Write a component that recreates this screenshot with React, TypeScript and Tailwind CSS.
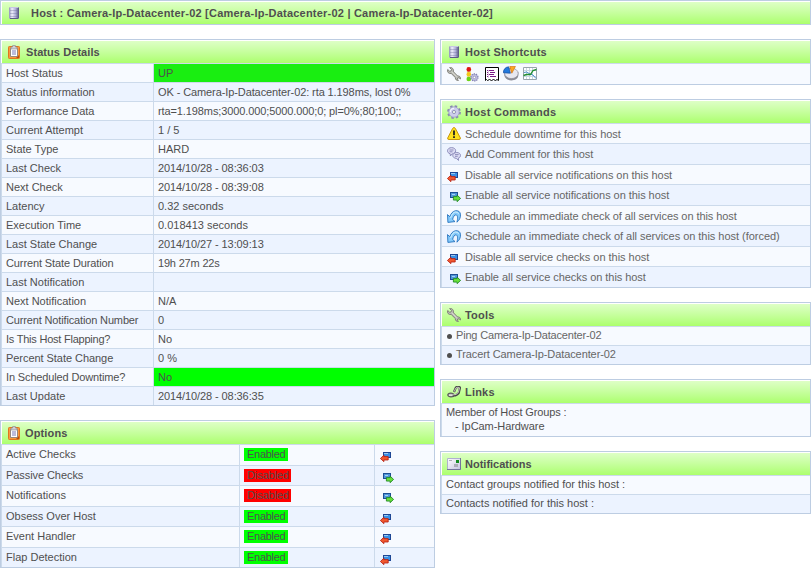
import type { ReactNode } from "react";

function Database() {
  return (
    <svg width="10" height="12" viewBox="0 0 10 12" className="block shrink-0">
      <defs>
        <linearGradient id="db" x1="0" x2="1">
          <stop offset="0" stopColor="#8e8eb8" />
          <stop offset=".3" stopColor="#f0f0fc" />
          <stop offset=".65" stopColor="#b0b0d8" />
          <stop offset="1" stopColor="#50507a" />
        </linearGradient>
      </defs>
      <path d="M0 1Q0 0 2 0H8Q10 0 10 1V11Q10 12 8 12H2Q0 12 0 11Z" fill="url(#db)" />
      <path d="M1 .5h8" stroke="#c6c6e4" />
      <path d="M1 3.5h8M1 6.5h8M1 9.5h8" stroke="#6c6c9c" strokeOpacity=".35" />
      <path d="M1 11.5h8" stroke="#5c5c86" />
    </svg>
  );
}

function Clipboard() {
  return (
    <svg width="12" height="14" viewBox="0 0 12 14" className="block shrink-0">
      <rect x=".5" y="1.5" width="11" height="12" rx=".8" fill="#fb9a3c" stroke="#e0761e" />
      <path d="M2.5 3.5h7v8h-7z" fill="#fff" stroke="#98887c" />
      <path d="M4 5h4v5H4z" fill="#bcbcdc" />
      <path d="M3 4V2h1.6V.5h2.8V2H9v2z" fill="#d0d0d8" stroke="#84848c" strokeWidth=".6" />
      <path d="M11 10v3H8z" fill="#b94c0c" />
    </svg>
  );
}

function Gear() {
  return (
    <svg width="14" height="14" viewBox="0 0 14 14" className="block shrink-0">
      <circle cx="7" cy="7" r="5.8" fill="none" stroke="#8888b2" strokeWidth="2.2" strokeDasharray="2.4 2.155" />
      <circle cx="7" cy="7" r="5.2" fill="#cdcdec" stroke="#9c9cc4" strokeWidth=".8" />
      <path d="M3.3 7A3.7 3.7 0 0 1 7 3.3" fill="none" stroke="#f2f2ff" strokeWidth="1.2" />
      <circle cx="7" cy="7" r="1.6" fill="#f0fbe8" stroke="#8484b0" strokeWidth=".8" />
    </svg>
  );
}

function Wrench() {
  return (
    <svg width="14" height="14" viewBox="0 0 14 14" className="block shrink-0">
      <path
        d="M2.6.6L4.5 2.5 4 4 2.6 4.2.7 2.5C-.1 4.8 1.4 7 4.2 6.5L8.4 10.6C8.2 12.6 9.5 13.7 11.5 13.4L10.4 12.2 10.7 11 12 10.7 13.4 12C13.9 9.8 12.3 8.7 10.6 9L6.5 4.8C6.9 2 4.9-.1 2.6.6Z"
        fill="#bcbcb6" stroke="#787872" strokeWidth=".9"
      />
      <path d="M5 4.8l5 5" stroke="#e4e4de" strokeWidth=".8" />
    </svg>
  );
}

function TrafficGear() {
  return (
    <svg width="13" height="15" viewBox="0 0 13 15" className="block shrink-0">
      <path d="M.8 0h4v14h-4z" fill="#e9dfa4" />
      <circle cx="2.8" cy="2.4" r="2.3" fill="#e01414" />
      <circle cx="2.8" cy="7.2" r="2.2" fill="#f4c61c" />
      <circle cx="2.8" cy="12" r="2.3" fill="#6ad418" />
      <g transform="translate(4 6) scale(.63)">
        <circle cx="7" cy="7" r="5.5" fill="#c5c5e5" stroke="#8080ae" strokeWidth="2.3" strokeDasharray="2 1.45" />
        <circle cx="7" cy="7" r="4.7" fill="#c9c9e8" stroke="#9191bd" />
        <circle cx="7" cy="7" r="2" fill="#fff" stroke="#7777a5" />
      </g>
    </svg>
  );
}

function Report() {
  return (
    <svg width="14" height="15" viewBox="0 0 14 15" className="block shrink-0">
      <path d="M.5 13.5V.5h13v13l-1.5-1-1.5 1-2-1-2 1-2-1-2 1-1-1z" fill="#fff" stroke="#000" />
      <path d="M2 3.5h1M2 5.5h1M2 7.5h1M2 9.5h1M4 3.5h5M5 5.5h5M4 7.5h5M5 9.5h6" stroke="#7c1c88" />
      <path d="M3.5 3v8" stroke="#c9a0d0" strokeWidth=".6" />
    </svg>
  );
}

function Pie() {
  return (
    <svg width="16" height="15" viewBox="0 0 16 15" className="block shrink-0">
      <path d="M1.4 7.5v2C2 16 14.8 16 15.3 9.5V6z" fill="#8c8c96" />
      <ellipse cx="8.4" cy="7.4" rx="6.8" ry="5.2" fill="#e8e8f0" stroke="#8a8a94" strokeWidth=".7" />
      <path d="M7.4 7.2L.4 6.8C.2 3.4 2.6 1 5.6.8z" fill="#2379dc" stroke="#14499a" strokeWidth=".7" />
      <path d="M8.8 7.2L6.8.4H12.4z" fill="#ffa722" stroke="#d0700e" strokeWidth=".7" />
    </svg>
  );
}

function Chart() {
  return (
    <svg width="14" height="13" viewBox="0 0 14 13" className="block shrink-0">
      <path d="M.5.5h13v12H.5z" fill="#fff" stroke="#98a4ac" />
      <path d="M3.5 1v11M6.5 1v11M9.5 1v11M1 3.5h12M1 9.5h12" stroke="#c8d8e2" />
      <path d="M1 5.5L3.5 5 7 7l3 1 3 3.5" fill="none" stroke="#4a90cc" />
      <path d="M.5 8.5L3.5 7.5H7.5L10 3.5l3.5-1" fill="none" stroke="#238e30" strokeWidth="1.4" />
    </svg>
  );
}

function Warning() {
  return (
    <svg width="14" height="13" viewBox="0 0 14 13" className="block shrink-0">
      <path d="M7 .6Q8 .6 8.4 1.5L13.4 11Q13.6 12.5 12 12.5H2Q.3 12.5.7 11L5.6 1.5Q6 .6 7 .6Z" fill="#ffe11e" stroke="#c8960e" />
      <path d="M7 3.5v4.7M7 9.3V11" stroke="#222" strokeWidth="1.8" />
    </svg>
  );
}

function Comments() {
  return (
    <svg width="14" height="14" viewBox="0 0 14 14" className="block shrink-0" fill="#dcdcf4" stroke="#8686b6" strokeWidth=".9">
      <path d="M4.5.6C7 .6 8.7 2 8.7 3.8S7 6.9 5 7L3.4 9 3.2 6.8C1.4 6.3.5 5.2.5 3.8.5 2 2.3.6 4.5.6Z" />
      <path d="M2.5 3h4M2.5 4.8h3" />
      <path d="M9.8 5.5c2.2 0 3.7 1.3 3.7 2.9 0 1.3-.8 2.3-2.2 2.7l.2 2.3-2.2-2C7 11.2 5.8 10 5.8 8.4s1.7-2.9 4-2.9Z" />
      <path d="M8 7.6h3.6M8 9.3h2.7" />
    </svg>
  );
}

function Refresh() {
  return (
    <svg width="14" height="13" viewBox="0 0 14 13" className="block shrink-0">
      <path
        d="M.5 4.6L.9 12.4 8 11.6 5.6 9.4C6.2 7 7.4 4.6 9 4.8 10.8 5.2 11 8.4 9.9 12.2 12.4 10.2 13.6 7.6 13.5 4.8 13.4 1.8 11.4.4 8.6.7 5.8 1.2 3.8 3.6 2.8 6.7Z"
        fill="#86cbfb" stroke="#2673bd" strokeWidth=".9"
      />
      <path d="M3.6 7.8C4.8 4 6.6 2 8.8 2q2 0 2.8 1.8" stroke="#d9f2ff" strokeWidth="1" fill="none" />
    </svg>
  );
}

function TurnOff() {
  return (
    <svg width="11" height="10" viewBox="0 0 11 10" className="block shrink-0">
      <path d="M3 0h8v6H3z" fill="#1d4694" />
      <path d="M4 1h6v4H4z" fill="#398fe5" />
      <path d="M4 1h4v1H4z" fill="#9bcaf2" />
      <path d="M.4 6.5L3.9 3.2V4.6H8.2V8H3.9V9.7Z" fill="#f0582f" stroke="#b51c0e" strokeWidth=".8" />
    </svg>
  );
}

function TurnOn() {
  return (
    <svg width="11" height="10" viewBox="0 0 11 10" className="block shrink-0">
      <path d="M0 0h8v6H0z" fill="#1d4f94" />
      <path d="M1 1h6v4H1z" fill="#4e96d9" />
      <path d="M2 2h3v1H2z" fill="#a5d2f3" />
      <path d="M10.6 6.4L7.1 3.1V4.6H3.4V8.1h3.7v1.6Z" fill="#67df3c" stroke="#16811c" strokeWidth=".8" />
    </svg>
  );
}

function Chain() {
  return (
    <svg width="14" height="12" viewBox="0 0 14 12" className="block shrink-0" fill="none">
      <ellipse cx="3.9" cy="9" rx="3.1" ry="1.9" fill="#b8b8b2" stroke="#5c5c5c" strokeWidth="1.2" />
      <path d="M2 9.2h3" stroke="#f4f4f0" />
      <path d="M7 6L8.8 1.6Q11 0 13 1.6L11.8 6.8Q9.8 9.8 6 9.4" stroke="#484848" strokeWidth="2.2" />
      <path d="M7.2 5.6L9 1.8Q11 .6 12.6 1.8L11.3 6.6Q9.5 9 6 8.9" stroke="#d4d4cc" strokeWidth=".9" />
    </svg>
  );
}

function Envelope() {
  return (
    <svg width="14" height="12" viewBox="0 0 14 12" className="block shrink-0">
      <defs>
        <linearGradient id="env" x1="0" x2="1" y2="1">
          <stop stopColor="#fff" />
          <stop offset="1" stopColor="#c4c4e0" />
        </linearGradient>
      </defs>
      <path d="M.5.5h13v11H.5z" fill="url(#env)" stroke="#b0b0d0" />
      <path d="M13.5 0v11.5H0" stroke="#74749c" fill="none" />
      <path d="M9 2h3v3H9z" fill="#128a20" />
      <path d="M2 2.5h3M7 6.5h4M7 7.5h4M7 8.5h4" stroke="#acacb8" />
    </svg>
  );
}

/** Total widening or narrowing in px that is spread over the letters of a text. */
const fit: Record<string, number> = {
  "Host : Camera-Ip-Datacenter-02 [Camera-Ip-Datacenter-02 | Camera-Ip-Datacenter-02]": 17.5,
  "Status Details": 1,
  "Options": 1,
  "Host Shortcuts": 3,
  "Host Commands": 4,
  "Tools": 1,
  "Links": 1,
  "Performance Data": -1,
  "Current Notification Number": -4,
  "Current State Duration": -2.5,
  "Is This Host Flapping?": -5,
  "In Scheduled Downtime?": -3,
  "Percent State Change": -1,
  "OK - Camera-Ip-Datacenter-02: rta 1.198ms, lost 0%": -5,
  "rta=1.198ms;3000.000;5000.000;0; pl=0%;80;100;;": -5,
  "2014/10/28 - 08:36:03": -2,
  "2014/10/28 - 08:39:08": -2,
  "2014/10/27 - 13:09:13": -2,
  "2014/10/28 - 08:36:35": -2,
  "19h 27m 22s": -2,
  "Passive Checks": -1,
  "Enabled": -2,
  "Disabled": -1,
  "Add Comment for this host": -2,
  "Disable all service notifications on this host": -2,
  "Enable all service notifications on this host": -2.5,
  "Schedule an immediate check of all services on this host": -4,
  "Schedule an immediate check of all services on this host (forced)": -2,
  "Disable all service checks on this host": -1,
  "Enable all service checks on this host": -2,
  "Ping Camera-Ip-Datacenter-02": -5,
  "Tracert Camera-Ip-Datacenter-02": -3,
  "Member of Host Groups :": -3,
  "- IpCam-Hardware": -1,
};

function T({ children }: { children: string }) {
  return <span style={{ letterSpacing: `${(fit[children] ?? 0) / Math.max(1, children.length)}px` }}>{children}</span>;
}

function Panel({ icon, title, children, iconPad = "pl-[5px]", titleCol = "w-[18px]" }: {
  icon: ReactNode; title: string; children?: ReactNode; iconPad?: string; titleCol?: string;
}) {
  return (
    <section className="border border-[#bdcde2]">
      <header className={`flex h-[23px] items-center border-l border-t border-white bg-linear-to-b from-[#deffc6] to-[#acff6c] bg-clip-padding ${iconPad}`}>
        <span className={`shrink-0 ${titleCol}`}>{icon}</span>
        <h2 className="whitespace-pre text-[11px] font-bold leading-[20px]"><T>{title}</T></h2>
      </header>
      {children}
    </section>
  );
}

const stripe = (i: number) => (i % 2 ? "bg-[#ecf3ff]" : "bg-[#f7faff]");
const rowBase = "flex border-t border-l border-[#ccdaeb] leading-[18px] whitespace-pre";

const status: [string, string, string?][] = [
  ["Host Status", "UP", "bg-[#19ee11]"],
  ["Status information", "OK - Camera-Ip-Datacenter-02: rta 1.198ms, lost 0%"],
  ["Performance Data", "rta=1.198ms;3000.000;5000.000;0; pl=0%;80;100;;"],
  ["Current Attempt", "1 / 5"],
  ["State Type", "HARD"],
  ["Last Check", "2014/10/28 - 08:36:03"],
  ["Next Check", "2014/10/28 - 08:39:08"],
  ["Latency", "0.32 seconds"],
  ["Execution Time", "0.018413 seconds"],
  ["Last State Change", "2014/10/27 - 13:09:13"],
  ["Current State Duration", "19h 27m 22s"],
  ["Last Notification", ""],
  ["Next Notification", "N/A"],
  ["Current Notification Number", "0"],
  ["Is This Host Flapping?", "No"],
  ["Percent State Change", "0 %"],
  ["In Scheduled Downtime?", "No", "bg-[#00ff00]"],
  ["Last Update", "2014/10/28 - 08:36:35"],
];

const options: [string, boolean][] = [
  ["Active Checks", true],
  ["Passive Checks", false],
  ["Notifications", false],
  ["Obsess Over Host", true],
  ["Event Handler", true],
  ["Flap Detection", true],
];

const commands: [ReactNode, string][] = [
  [<span className="block pt-[3px]"><Warning /></span>, "Schedule downtime for this host"],
  [<span className="block pt-[3px]"><Comments /></span>, "Add Comment for this host"],
  [<span className="block pt-[7px]"><TurnOff /></span>, "Disable all service notifications on this host"],
  [<span className="block pl-[3px] pt-[7px]"><TurnOn /></span>, "Enable all service notifications on this host"],
  [<span className="block pt-[4px]"><Refresh /></span>, "Schedule an immediate check of all services on this host"],
  [<span className="block pt-[4px]"><Refresh /></span>, "Schedule an immediate check of all services on this host (forced)"],
  [<span className="block pt-[7px]"><TurnOff /></span>, "Disable all service checks on this host"],
  [<span className="block pl-[3px] pt-[7px]"><TurnOn /></span>, "Enable all service checks on this host"],
];

export default function App() {
  return (
    <main className="h-[568px] w-[811px] overflow-hidden bg-white font-['Liberation_Sans',Arial,sans-serif] text-[11px] text-[#4f4f4f]">
      <Panel icon={<Database />} title="Host : Camera-Ip-Datacenter-02 [Camera-Ip-Datacenter-02 | Camera-Ip-Datacenter-02]" iconPad="pl-[7px]" titleCol="w-[22px]" />
      <div className="mt-[14px] flex items-start gap-[5px]">
        <div className="flex w-[435px] flex-col gap-[14px]">
          <Panel icon={<Clipboard />} title="Status Details" iconPad="pl-[6px]">
            {status.map(([k, v, bg], i) => (
              <div key={k} className={`${rowBase} h-[19px] ${stripe(i)}`}>
                <div className="w-[151px] pl-1"><T>{k}</T></div>
                <div className={`flex-1 border-l border-[#ccdaeb] pl-1 ${bg ?? ""}`}><T>{v}</T></div>
              </div>
            ))}
          </Panel>
          <Panel icon={<Clipboard />} title="Options" iconPad="pl-[6px]" titleCol="w-[17px]">
            {options.map(([k, on], i) => (
              <div key={k} className={`${rowBase} ${i % 2 ? "h-[20px]" : "h-[21px]"} ${stripe(i)}`}>
                <div className="w-[237px] pl-1"><T>{k}</T></div>
                <div className="w-[135px] border-l border-[#ccdaeb] pl-1 pt-[3px]">
                  <span className={`block h-[13px] pl-[3px] leading-[13px] ${on ? "w-[44px] bg-[#00ff00]" : "w-[47px] bg-[#ff0000]"}`}>
                    <T>{on ? "Enabled" : "Disabled"}</T>
                  </span>
                </div>
                <div className={`flex-1 border-l border-[#ccdaeb] pt-[7px] ${on ? "pl-[5px]" : "pl-[8px]"}`}>{on ? <TurnOff /> : <TurnOn />}</div>
              </div>
            ))}
          </Panel>
        </div>
        <div className="flex w-[371px] flex-col gap-[14px]">
          <Panel icon={<span className="block pl-[2px]"><Database /></span>} title="Host Shortcuts">
            <div className={`${rowBase} h-[21px] items-start bg-[#f7faff] pl-[5px] pt-[3px]`}>
              <Wrench />
              <span className="ml-[5px]"><TrafficGear /></span>
              <span className="ml-[6px]"><Report /></span>
              <span className="-mt-px ml-[4px]"><Pie /></span>
              <span className="ml-[4px]"><Chart /></span>
            </div>
          </Panel>
          <Panel icon={<Gear />} title="Host Commands">
            {commands.map(([icon, text], i) => (
              <div key={text} className={`${rowBase} ${i % 2 ? "h-[21px]" : "h-[20px]"} pl-[5px] text-[#666] ${stripe(i)}`}>
                <span className="w-[18px] shrink-0">{icon}</span>
                <span className="pt-px"><T>{text}</T></span>
              </div>
            ))}
          </Panel>
          <Panel icon={<Wrench />} title="Tools">
            {["Ping Camera-Ip-Datacenter-02", "Tracert Camera-Ip-Datacenter-02"].map((t, i) => (
              <div key={t} className={`${rowBase} h-[19px] pl-[5px] text-[#666] ${stripe(i)}`}>
                <span className="mr-1 mt-[7px] size-[5px] rounded-full bg-[#4f4f4f]" />
                <span className="leading-[17px]"><T>{t}</T></span>
              </div>
            ))}
          </Panel>
          <Panel icon={<Chain />} title="Links">
            <div className={`${rowBase} h-[33px] flex-col bg-[#f7faff] pl-1 pt-px`}>
              <span className="leading-[14px]"><T>Member of Host Groups :</T></span>
              <span className="pl-[9px] leading-[14px]"><T>- IpCam-Hardware</T></span>
            </div>
          </Panel>
          <Panel icon={<Envelope />} title="Notifications">
            {["Contact groups notified for this host :", "Contacts notified for this host :"].map((t, i) => (
              <div key={t} className={`${rowBase} h-[19px] pl-1 ${stripe(i)}`}>
                <span className="leading-[17px]"><T>{t}</T></span>
              </div>
            ))}
          </Panel>
        </div>
      </div>
    </main>
  );
}
